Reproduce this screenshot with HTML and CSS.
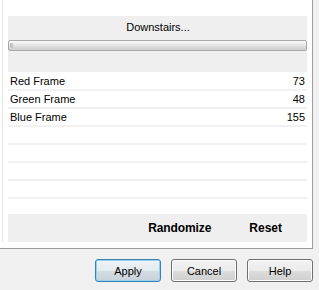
FILE: index.html
```html
<!DOCTYPE html>
<html lang="en">
<head>
    <meta charset="UTF-8">
    <title>Downstairs</title>
    <link rel="stylesheet" href="styles.css">
</head>
<body>

<div class="frame">
    <div class="inner">
        <div class="top-gap"></div>

        <div class="preset">
            <div class="preset-name">Downstairs...</div>
            <div class="slider"><span class="thumb"></span></div>
        </div>

        <div class="rows">
            <div class="row"><span>Red Frame</span><span class="val">73</span></div>
            <div class="row"><span>Green Frame</span><span class="val">48</span></div>
            <div class="row"><span>Blue Frame</span><span class="val">155</span></div>
            <div class="row"></div>
            <div class="row"></div>
            <div class="row"></div>
            <div class="row"></div>
        </div>

        <div class="actions">
            <span class="link">Randomize</span>
            <span class="link">Reset</span>
        </div>
    </div>
</div>

<div class="buttons">
    <button class="btn default">Apply</button>
    <button class="btn">Cancel</button>
    <button class="btn">Help</button>
</div>

</body>
</html>
```

FILE: styles.css
```css
body {
    margin: 0;
    background: #f0f0f0;
    font-family: "Liberation Sans", Arial, sans-serif;
    font-size: 11px;
    color: #000;
    width: 319px;
    height: 290px;
    overflow: hidden;
}
.frame {
    width: 310px;
    height: 248px;
    background: #fff;
    padding-left: 2px;
    border-right: 1px solid #9d9d9d;
    border-bottom: 1px solid #9d9d9d;
}
.inner {
    height: 242px;
    border-left: 1px solid #e6e6e6;
    padding: 0 5px 0 5px;
    display: flex;
    flex-direction: column;
}
.top-gap {
    height: 16px;
}
.preset {
    background: #efefef;
    height: 56px;
    padding-top: 5px;
    box-sizing: border-box;
}
.preset-name {
    text-align: center;
    height: 13px;
    line-height: 13px;
    padding-left: 1px;
}
.slider {
    position: relative;
    margin-top: 6px;
    height: 9px;
    border: 1px solid #a9a9a9;
    border-radius: 2px;
    background: linear-gradient(to bottom, #fbfbfb 0%, #ececec 35%, #d9d9d9 70%, #cfcfcf 100%);
}
.thumb {
    position: absolute;
    left: 1px;
    top: 2px;
    width: 3px;
    height: 5px;
    background: #c4c4c4;
    border-radius: 1px;
}
.rows {
    height: 142px;
    padding-top: 1px;
    box-sizing: border-box;
    background: #fff;
}
.row {
    height: 16px;
    line-height: 16px;
    border-bottom: 2px solid #f1f1f1;
    display: flex;
    justify-content: space-between;
    padding: 0 2px 0 2px;
}
.val {
    text-align: right;
}
.actions {
    background: #efefef;
    height: 28px;
    display: flex;
    justify-content: flex-end;
    align-items: center;
    gap: 38px;
    padding-right: 25px;
    font-weight: bold;
    font-size: 12px;
}
.actions .link:first-child {
    letter-spacing: -0.1px;
}
.buttons {
    display: flex;
    justify-content: flex-end;
    gap: 10px;
    padding: 10px 6px 0 0;
}
.btn {
    width: 66px;
    height: 23px;
    font-family: "Liberation Sans", Arial, sans-serif;
    font-size: 11px;
    color: #000;
    border: 1px solid #707070;
    border-radius: 3px;
    background: linear-gradient(to bottom, #f2f2f2 0%, #ebebeb 50%, #dddddd 51%, #cfcfcf 100%);
    box-shadow: inset 0 0 0 1px #fcfcfc;
    padding: 0;
}
.btn.default {
    border-color: #3c7fb1;
    box-shadow: inset 0 0 0 1px #8fd3ee;
    background: linear-gradient(to bottom, #eef3f6 0%, #e4ebef 50%, #d4dde2 51%, #c7d2d8 100%);
}
```
